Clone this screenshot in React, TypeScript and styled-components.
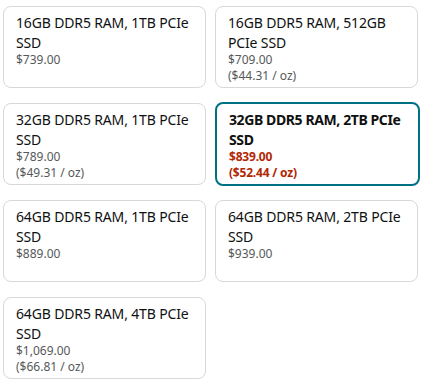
import * as React from 'react';
import styled, { createGlobalStyle } from 'styled-components';

interface Option {
    title: string;
    price: string;
    unit?: string;
    selected?: boolean;
}

const options: Option[] = [
    { title: '16GB DDR5 RAM, 1TB PCIe SSD', price: '$739.00' },
    { title: '16GB DDR5 RAM, 512GB PCIe SSD', price: '$709.00', unit: '($44.31 / oz)' },
    { title: '32GB DDR5 RAM, 1TB PCIe SSD', price: '$789.00', unit: '($49.31 / oz)' },
    { title: '32GB DDR5 RAM, 2TB PCIe SSD', price: '$839.00', unit: '($52.44 / oz)', selected: true },
    { title: '64GB DDR5 RAM, 1TB PCIe SSD', price: '$889.00' },
    { title: '64GB DDR5 RAM, 2TB PCIe SSD', price: '$939.00' },
    { title: '64GB DDR5 RAM, 4TB PCIe SSD', price: '$1,069.00', unit: '($66.81 / oz)' }
];

const GlobalStyle = createGlobalStyle`
    html, body {
        margin: 0;
        background: #ffffff;
    }
    body {
        font-family: 'Noto Sans', 'Open Sans', sans-serif;
        color: #0f1111;
    }
`;

const SwatchGrid = styled.div`
    display: grid;
    grid-template-columns: 203px 203px;
    grid-auto-rows: 82px;
    column-gap: 9px;
    row-gap: 15px;
    padding: 6px 3px;
`;

const Swatch = styled.div<{ $selected?: boolean }>`
    display: flex;
    flex-direction: column;
    box-sizing: border-box;
    padding: 6px 12px 2px 12px;
    border: ${({ $selected }) => ($selected ? '2px solid #007185' : '1px solid #d5d9d9')};
    border-radius: 8px;
    margin: ${({ $selected }) => ($selected ? '-1px -2px -1px 0' : '0')};
    background: #ffffff;
`;

const Title = styled.div<{ $selected?: boolean }>`
    font-size: 14px;
    line-height: 20px;
    letter-spacing: ${({ $selected }) => ($selected ? '-0.4px' : '-0.15px')};
    font-weight: ${({ $selected }) => ($selected ? 700 : 400)};
    color: #0f1111;
`;

const Price = styled.div<{ $selected?: boolean }>`
    font-size: 12px;
    line-height: 16px;
    margin-top: -1px;
    letter-spacing: ${({ $selected }) => ($selected ? '-0.2px' : '0')};
    font-weight: ${({ $selected }) => ($selected ? 700 : 400)};
    color: ${({ $selected }) => ($selected ? '#b12704' : '#565959')};
`;

export default function App() {
    return (
        <>
            <GlobalStyle />
            <SwatchGrid>
                {options.map((o) => (
                    <Swatch key={o.title} $selected={o.selected}>
                        <Title $selected={o.selected}>{o.title}</Title>
                        <Price $selected={o.selected}>
                            {o.price}
                            {o.unit && (
                                <>
                                    <br />
                                    {o.unit}
                                </>
                            )}
                        </Price>
                    </Swatch>
                ))}
            </SwatchGrid>
        </>
    );
}
